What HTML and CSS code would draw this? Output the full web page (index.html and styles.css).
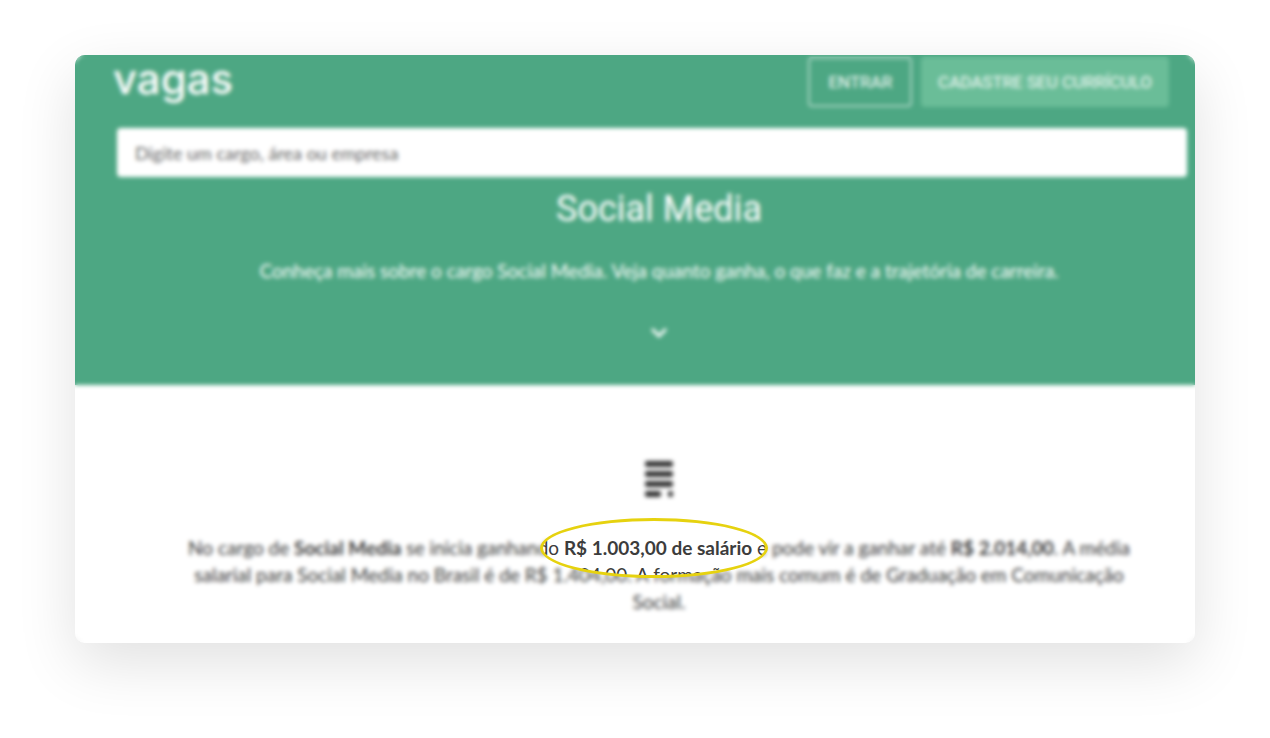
FILE: index.html
```html
<!DOCTYPE html>
<html lang="pt-BR">
<head>
  <meta charset="UTF-8" />
  <meta name="viewport" content="width=device-width, initial-scale=1.0" />
  <title>Social Media - vagas</title>
  <link rel="stylesheet" href="styles.css">
</head>
<body>
  <main class="card">
    <header class="hero">
      <div class="topbar">
        <a class="logo" href="#">vagas</a>
        <nav class="actions">
          <button class="btn btn-outline" type="button">ENTRAR</button>
          <button class="btn btn-fill" type="button">CADASTRE SEU CURRÍCULO</button>
        </nav>
      </div>
      <form class="search">
        <input type="text" class="search-input" placeholder="Digite um cargo, área ou empresa" aria-label="Digite um cargo, área ou empresa" />
      </form>
      <div class="intro">
        <h1>Social Media</h1>
        <p>Conheça mais sobre o cargo Social Media. Veja quanto ganha, o que faz e a trajetória de carreira.</p>
        <svg class="arrow" width="18" height="12" viewBox="0 0 18 12" aria-hidden="true">
          <path d="M2 2l7 7 7-7" fill="none" stroke="#fff" stroke-width="3" />
        </svg>
      </div>
    </header>

    <section class="info">
      <svg class="info-icon" width="30" height="38" viewBox="0 0 30 38" fill="#333" aria-hidden="true">
        <rect x="1" y="1" width="28" height="6" rx="2" />
        <rect x="1" y="11" width="28" height="6" rx="2" />
        <rect x="1" y="21" width="28" height="6" rx="2" />
        <rect x="1" y="31" width="16" height="6" rx="2" />
        <rect x="24" y="31" width="5" height="6" rx="2" />
      </svg>
      <p>No cargo de <strong>Social Media</strong> se inicia ganhando <strong>R$ 1.003,00 de salário</strong> e pode vir a ganhar até <strong>R$ 2.014,00</strong>. A média salarial para Social Media no Brasil é de R$ 1.404,00. A formação mais comum é de Graduação em Comunicação Social.</p>
    </section>

    <!-- desfoque com recorte em volta do salário -->
    <div class="blur"></div>
    <div class="ring"></div>
  </main>
</body>
</html>
```

FILE: styles.css
```css
* {
  box-sizing: border-box;
}

body {
  margin: 0;
  padding: 55px 75px 95px;
  background-color: #fff;
  color: #3c3c3c;
  font-family: Lato, sans-serif;
  font-size: 19px;
  line-height: 27px;
}

.card {
  position: relative;
  overflow: hidden;
  border-radius: 10px;
  background-color: #fff;
  box-shadow: 0 20px 60px rgba(0, 0, 0, 0.12);
}

.hero {
  padding-bottom: 46px;
  background-color: #4da783;
  color: #fff;
}

.topbar {
  display: flex;
  justify-content: space-between;
  align-items: flex-start;
  padding: 0 26px 0 38px;
}

.logo {
  color: #fff;
  font-family: Inter, sans-serif;
  font-size: 42px;
  line-height: 48px;
  font-weight: 500;
  text-decoration: none;
}

.actions {
  display: flex;
  gap: 9px;
  padding-top: 2px;
}

.btn {
  height: 50px;
  padding: 0 18px;
  border: 2px solid #6abd98;
  border-radius: 4px;
  color: #fff;
  font-family: Roboto, sans-serif;
  font-size: 17px;
  cursor: pointer;
}

.btn-outline {
  border-color: #a6d3c1;
  background-color: transparent;
}

.btn-fill {
  padding: 0 15px;
  background-color: #6abd98;
}

.search {
  padding: 21px 8px 0 42px;
}

.search-input {
  display: block;
  width: 100%;
  height: 49px;
  padding: 0 18px;
  border: none;
  border-radius: 4px;
  background-color: #fff;
  font-family: Lato, sans-serif;
  font-size: 18px;
}

.search-input::placeholder {
  color: #666;
}

.intro {
  padding: 8px 0 0 48px;
  text-align: center;
}

.intro h1 {
  margin: 0 0 24px;
  font-family: Roboto, sans-serif;
  font-size: 36px;
  line-height: 48px;
  font-weight: 400;
}

.intro p {
  margin: 0 0 43px;
}

.arrow {
  display: block;
  margin: 0 auto;
}

.info {
  padding: 75px 60px 28px 108px;
  text-align: center;
}

.info-icon {
  display: block;
  margin: 0 auto 36px;
}

.info p {
  margin: 0;
}

.blur {
  position: absolute;
  inset: 0;
  pointer-events: none;
  backdrop-filter: blur(2px);
  mask-image: radial-gradient(113px 29px at calc(50% + 19px) 493px, transparent 99%, #000 100%);
}

.ring {
  position: absolute;
  top: 463px;
  left: calc(50% - 95px);
  width: 228px;
  height: 60px;
  border: 3px solid #e6d20f;
  border-radius: 50%;
  pointer-events: none;
}
```
